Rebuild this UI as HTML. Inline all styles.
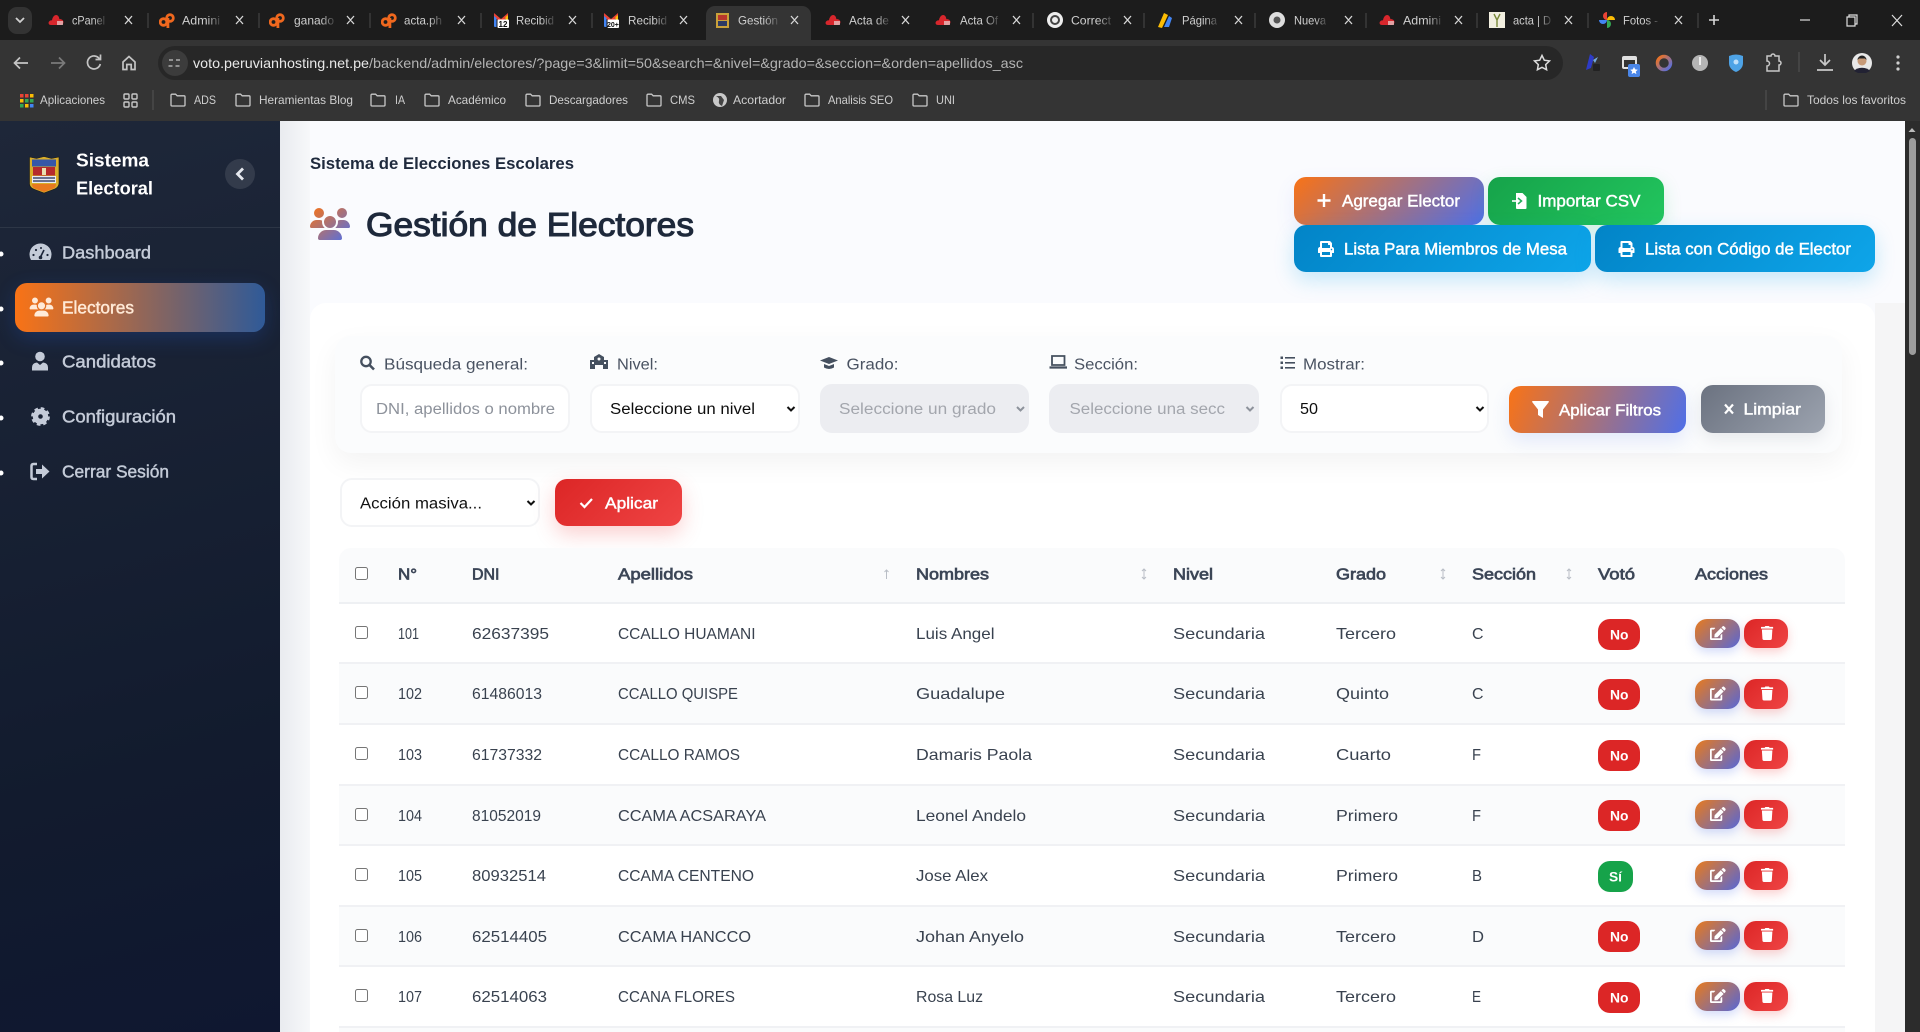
<!DOCTYPE html>
<html lang="es"><head><meta charset="utf-8"><title>Gestión de Electores</title>
<style>
html,body{margin:0;padding:0;width:1920px;height:1032px;overflow:hidden;background:#f5f6f8;font-family:"Liberation Sans",sans-serif}
.b{position:absolute;box-sizing:border-box}
svg.o{position:absolute;left:0;top:0;width:1920px;height:1032px;pointer-events:none}
text{font-family:"Liberation Sans",sans-serif}
.m{stroke:currentColor;stroke-width:.45px}
.h{stroke:currentColor;stroke-width:.7px}
.sb{font-weight:700}
.sel{border:2px solid #f3f4f6;background:#fff;border-radius:12px}
.dis{background:#ecedf1;border-color:#ecedf1}
.og{background:linear-gradient(135deg,#f97316,#4f6fe8)}
.rd{background:linear-gradient(135deg,#dc2626,#ef4444)}
.bt{border-radius:12px}
.ed{border-radius:12px;left:1695px;width:45px;height:29px;background:linear-gradient(135deg,#e97a1c,#5668d8);box-shadow:0 4px 10px rgba(79,111,232,.25)}
.dl{border-radius:12px;left:1744px;width:44px;height:29px;background:linear-gradient(135deg,#dc2626,#ef4444);box-shadow:0 4px 10px rgba(239,68,68,.25)}
.no{border-radius:12px;left:1598px;width:42px;height:31px;background:#dc2626}
.si{border-radius:12px;left:1598px;width:35px;height:31px;background:#16a34a}
.cb{left:355px;width:13px;height:13px;border:1px solid #767676;border-radius:2.5px;background:#fff}
.row{left:339px;width:1506px;height:60px;border-bottom:2px solid #f0f1f4}
</style></head><body>

<!-- browser chrome -->
<div class="b" style="left:0;top:0;width:1920px;height:40px;background:#1c1c1c"></div>
<div class="b" style="left:0;top:40px;width:1920px;height:81px;background:#343434"></div>
<div class="b" style="left:8px;top:7px;width:24px;height:27px;background:#333;border-radius:9px"></div>
<div class="b" style="left:706px;top:6px;width:105px;height:34px;background:#343434;border-radius:9px 9px 0 0"></div>
<div class="b" style="left:158px;top:46px;width:1405px;height:34px;background:#272727;border-radius:17px"></div>
<div class="b" style="left:162px;top:50px;width:26px;height:26px;background:#3c3c3c;border-radius:13px"></div>

<!-- main background -->
<div class="b" style="left:280px;top:121px;width:1625px;height:911px;background:#fafbfe"></div>
<div class="b" style="left:280px;top:121px;width:30px;height:911px;background:linear-gradient(90deg,#e9ebef,#f7f8fa)"></div>
<div class="b" style="left:1875px;top:303px;width:30px;height:729px;background:#f5f5f6"></div>
<div class="b" style="left:310px;top:303px;width:1565px;height:729px;background:#fff;border-radius:16px 16px 0 0"></div>

<!-- scrollbar -->
<div class="b" style="left:1905px;top:121px;width:15px;height:911px;background:#2c2c2c"></div>
<div class="b" style="left:1909px;top:138px;width:7px;height:217px;background:#9d9d9d;border-radius:4px"></div>

<!-- sidebar -->
<div class="b" style="left:0;top:121px;width:280px;height:911px;background:linear-gradient(165deg,#1e2739,#121b2e 70%,#0f1730)"></div>
<div class="b" style="left:0;top:227px;width:280px;height:1px;background:rgba(255,255,255,.08)"></div>
<div class="b" style="left:225px;top:159px;width:30px;height:30px;border-radius:15px;background:rgba(255,255,255,.1)"></div>
<div class="b" style="left:15px;top:283px;width:250px;height:49px;border-radius:12px;background:linear-gradient(90deg,#f97316,#2f5a98);box-shadow:0 6px 20px rgba(37,99,235,.22)"></div>

<!-- top buttons -->
<div class="b bt og" style="left:1294px;top:177px;width:190px;height:48px;box-shadow:0 8px 20px rgba(79,111,232,.1)"></div>
<div class="b bt" style="left:1488px;top:177px;width:176px;height:48px;background:linear-gradient(135deg,#16a34a,#22c55e);box-shadow:0 6px 18px rgba(34,197,94,.18)"></div>
<div class="b bt" style="left:1294px;top:225px;width:297px;height:47px;background:linear-gradient(135deg,#0284c7,#0ea5e9);box-shadow:0 8px 20px rgba(14,165,233,.22)"></div>
<div class="b bt" style="left:1595px;top:225px;width:280px;height:47px;background:linear-gradient(135deg,#0284c7,#0ea5e9);box-shadow:0 8px 20px rgba(14,165,233,.22)"></div>

<!-- filter card -->
<div class="b" style="left:335px;top:336px;width:1507px;height:117px;background:#fbfcfd;border-radius:16px;box-shadow:0 10px 28px rgba(0,0,0,.05)"></div>
<div class="b sel" style="left:360px;top:384px;width:210px;height:49px"></div>
<div class="b sel" style="left:590px;top:384px;width:210px;height:49px"></div>
<div class="b sel dis" style="left:820px;top:384px;width:209px;height:49px"></div>
<div class="b sel dis" style="left:1049px;top:384px;width:210px;height:49px"></div>
<div class="b sel" style="left:1280px;top:384px;width:209px;height:49px"></div>
<div class="b bt" style="left:1509px;top:386px;width:177px;height:47px;background:linear-gradient(110deg,#f97316,#4f6fe8);box-shadow:0 8px 18px rgba(79,111,232,.14)"></div>
<div class="b bt" style="left:1701px;top:385px;width:124px;height:48px;background:linear-gradient(135deg,#6b7280,#9ca3af);box-shadow:0 6px 16px rgba(107,114,128,.14)"></div>

<!-- bulk -->
<div class="b sel" style="left:340px;top:478px;width:200px;height:49px"></div>
<div class="b bt rd" style="left:555px;top:479px;width:127px;height:47px;box-shadow:0 8px 20px rgba(239,68,68,.25)"></div>

<!-- table -->
<div class="b" style="left:339px;top:548px;width:1506px;height:56px;background:#fafbfc;border-bottom:2px solid #eef0f3;border-radius:12px 12px 0 0"></div>
<div class="b row" style="top:604px;height:60px;background:#fff"></div>
<div class="b row" style="top:664px;height:61px;background:#fafbfc"></div>
<div class="b row" style="top:725px;height:61px;background:#fff"></div>
<div class="b row" style="top:786px;height:60px;background:#fafbfc"></div>
<div class="b row" style="top:846px;height:61px;background:#fff"></div>
<div class="b row" style="top:907px;height:60px;background:#fafbfc"></div>
<div class="b row" style="top:967px;height:61px;background:#fff"></div>
<div class="b row" style="top:1028px;height:4px;background:#fafbfc;border:0"></div>

<div class="b cb" style="top:567px"></div>
<div class="b cb" style="top:626px"></div>
<div class="b cb" style="top:686px"></div>
<div class="b cb" style="top:747px"></div>
<div class="b cb" style="top:808px"></div>
<div class="b cb" style="top:868px"></div>
<div class="b cb" style="top:929px"></div>
<div class="b cb" style="top:989px"></div>

<div class="b no" style="top:619px"></div><div class="b ed" style="top:619px"></div><div class="b dl" style="top:619px"></div>
<div class="b no" style="top:679px"></div><div class="b ed" style="top:679px;height:30px"></div><div class="b dl" style="top:679px;height:30px"></div>
<div class="b no" style="top:740px"></div><div class="b ed" style="top:740px"></div><div class="b dl" style="top:740px"></div>
<div class="b no" style="top:800px"></div><div class="b ed" style="top:800px"></div><div class="b dl" style="top:800px"></div>
<div class="b si" style="top:861px"></div><div class="b ed" style="top:861px"></div><div class="b dl" style="top:861px"></div>
<div class="b no" style="top:921px"></div><div class="b ed" style="top:921px"></div><div class="b dl" style="top:921px"></div>
<div class="b no" style="top:982px"></div><div class="b ed" style="top:982px"></div><div class="b dl" style="top:982px"></div>

<svg class="o" viewBox="0 0 1920 1032" xmlns="http://www.w3.org/2000/svg">
<defs>
<linearGradient id="fd" x1="0" x2="1" y1="0" y2="0"><stop offset=".65" stop-color="#cfcfcf"/><stop offset="1" stop-color="#cfcfcf" stop-opacity=".2"/></linearGradient>
<linearGradient id="tg" x1="0" x2="1" y1="0" y2="1"><stop offset="0" stop-color="#f97316"/><stop offset="1" stop-color="#4f6fe8"/></linearGradient>
<symbol id="users" viewBox="0 0 640 512"><path d="M144 0a80 80 0 1 1 0 160A80 80 0 1 1 144 0zM512 0a80 80 0 1 1 0 160A80 80 0 1 1 512 0zM0 298.700C0 239.800 47.800 192 106.700 192h42.700c15.900 0 31 3.500 44.600 9.700c-1.300 7.200-1.900 14.700-1.900 22.300c0 38.200 16.800 72.500 43.300 96c-.2 0-.4 0-.7 0H21.300C9.600 320 0 310.400 0 298.700zM405.300 320c-.2 0-.4 0-.7 0c26.600-23.500 43.300-57.800 43.300-96c0-7.600-.7-15-1.900-22.300c13.600-6.300 28.700-9.700 44.600-9.700h42.700C592.200 192 640 239.800 640 298.700c0 11.800-9.600 21.300-21.300 21.300H405.300zM224 224a96 96 0 1 1 192 0 96 96 0 1 1 -192 0zM128 485.300C128 411.700 187.700 352 261.300 352H378.700C452.300 352 512 411.700 512 485.300c0 14.700-11.900 26.700-26.700 26.700H154.700c-14.700 0-26.700-11.900-26.700-26.700z"/></symbol>
<symbol id="trash" viewBox="0 0 448 512"><path fill="#fff" d="M432 32H312l-9.400-18.700A24 24 0 0 0 281.100 0H166.800a23.720 23.720 0 0 0-21.400 13.300L136 32H16A16 16 0 0 0 0 48v32a16 16 0 0 0 16 16h416a16 16 0 0 0 16-16V48a16 16 0 0 0-16-16zM53.200 467a48 48 0 0 0 47.900 45h245.800a48 48 0 0 0 47.900-45L416 128H32z"/></symbol>
<symbol id="edit" viewBox="0 0 576 512"><path fill="#fff" d="M402.600 83.200l90.200 90.200c3.800 3.800 3.800 10 0 13.800L274.400 405.600l-92.800 10.300c-12.400 1.400-22.900-9.100-21.500-21.500l10.300-92.800L388.800 83.200c3.800-3.800 10-3.800 13.800 0zm162-22.900l-48.800-48.800c-15.200-15.200-39.900-15.200-55.200 0l-35.400 35.400c-3.800 3.800-3.800 10 0 13.800l90.200 90.200c3.800 3.800 10 3.800 13.800 0l35.400-35.400c15.200-15.300 15.200-40 0-55.200zM384 346.200V448H64V128h73.100c3.200 0 6.200-1.300 8.500-3.500l40-40c7.600-7.600 2.200-20.500-8.500-20.500H48C21.500 64 0 85.500 0 112v352c0 26.500 21.500 48 48 48h352c26.500 0 48-21.500 48-48V306.200c0-10.700-12.900-16-20.500-8.500l-40 40c-2.200 2.300-3.500 5.300-3.500 8.500z"/></symbol>
<symbol id="print" viewBox="0 0 512 512"><path fill="#fff" d="M448 192V77.250c0-8.490-3.370-16.620-9.370-22.630L393.370 9.370c-6-6-14.140-9.370-22.630-9.370H96C78.330 0 64 14.330 64 32v160c-35.350 0-64 28.650-64 64v112c0 8.840 7.160 16 16 16h48v96c0 17.670 14.330 32 32 32h320c17.670 0 32-14.330 32-32v-96h48c8.840 0 16-7.160 16-16V256c0-35.350-28.650-64-64-64zm-64 256H128v-96h256v96zm0-224H128V64h192v48c0 8.840 7.160 16 16 16h48v96zm48 72c-13.250 0-24-10.750-24-24 0-13.260 10.750-24 24-24s24 10.740 24 24c0 13.250-10.750 24-24 24z"/></symbol>
<symbol id="folder" viewBox="0 0 16 14"><path fill="none" stroke="#c8c8c8" stroke-width="1.300" d="M1 2.200a1 1 0 0 1 1-1h3.600l1.600 1.600H14a1 1 0 0 1 1 1V12a1 1 0 0 1-1 1H2a1 1 0 0 1-1-1z"/></symbol>
<symbol id="redcloud" viewBox="0 0 16 14"><path fill="#d8262c" d="M3 12C.8 12 0 10 1 8.600 1.600 7.400 3 7.300 4 7.200 4.600 3.800 6.500 1.800 8.400 2c2 .3 2.800 2.400 3 4.200 2.200-.2 4.300 1.200 4 3.400-.2 1.600-1.600 2.400-3 2.400z"/><path fill="#e8c9c9" d="M9 8h6v4H9z" opacity=".75"/></symbol>
<symbol id="cp" viewBox="0 0 16 16"><circle cx="4.500" cy="10" r="3.300" fill="none" stroke="#f0681e" stroke-width="2.800"/><circle cx="11" cy="6" r="3.300" fill="none" stroke="#f0681e" stroke-width="2.800"/><rect x="7.500" y="6" width="2.800" height="10" fill="#f0681e"/></symbol>
<symbol id="gm" viewBox="0 0 16 16"><path fill="#ea4335" d="M1 1l7 6 7-6v4L8 10.500 1 5z"/><path fill="#4285f4" d="M1 4l2.500 2v9H2a1 1 0 0 1-1-1z"/><path fill="#fbbc04" d="M15 3l-2.500 2v4H15z"/><rect x="4.500" y="7.500" width="11.500" height="8.500" rx="1" fill="#fff"/></symbol>
</defs>

<!-- tabs -->
<path d="M16 18l4 4 4-4" fill="none" stroke="#d0d0d0" stroke-width="1.800"/>
<g font-size="12" fill="url(#fd)">
<text x="72" y="24.500" textLength="33" lengthAdjust="spacingAndGlyphs">cPanel</text>
<text x="182" y="24.500" textLength="38" lengthAdjust="spacingAndGlyphs">Admini</text>
<text x="294" y="24.500" textLength="40" lengthAdjust="spacingAndGlyphs">ganado</text>
<text x="404" y="24.500" textLength="38" lengthAdjust="spacingAndGlyphs">acta.ph</text>
<text x="516" y="24.500" textLength="38" lengthAdjust="spacingAndGlyphs">Recibid</text>
<text x="628" y="24.500" textLength="39" lengthAdjust="spacingAndGlyphs">Recibid</text>
<text x="738" y="24.500" textLength="40" lengthAdjust="spacingAndGlyphs">Gestión</text>
<text x="849" y="24.500" textLength="40" lengthAdjust="spacingAndGlyphs">Acta de</text>
<text x="960" y="24.500" textLength="38" lengthAdjust="spacingAndGlyphs">Acta Of</text>
<text x="1071" y="24.500" textLength="40" lengthAdjust="spacingAndGlyphs">Correct</text>
<text x="1182" y="24.500" textLength="35" lengthAdjust="spacingAndGlyphs">Página</text>
<text x="1294" y="24.500" textLength="32" lengthAdjust="spacingAndGlyphs">Nueva</text>
<text x="1403" y="24.500" textLength="38" lengthAdjust="spacingAndGlyphs">Admini</text>
<text x="1513" y="24.500" textLength="38" lengthAdjust="spacingAndGlyphs">acta | D</text>
<text x="1623" y="24.500" textLength="35" lengthAdjust="spacingAndGlyphs">Fotos -</text>
</g>
<!-- tab close -->
<g stroke="#d8d8d8" stroke-width="1.300" fill="none">
<path d="M125 16l7 8m0-8l-7 8M236 16l7 8m0-8l-7 8M347 16l7 8m0-8l-7 8M458 16l7 8m0-8l-7 8M569 16l7 8m0-8l-7 8M680 16l7 8m0-8l-7 8M791 16l7 8m0-8l-7 8M902 16l7 8m0-8l-7 8M1013 16l7 8m0-8l-7 8M1124 16l7 8m0-8l-7 8M1235 16l7 8m0-8l-7 8M1345 16l7 8m0-8l-7 8M1455 16l7 8m0-8l-7 8M1565 16l7 8m0-8l-7 8M1675 16l7 8m0-8l-7 8"/>
</g>
<g stroke="#4a4a4a" stroke-width="1"><path d="M148 13v15M259 13v15M370 13v15M481 13v15M592 13v15M1033 13v15M1144 13v15M1255 13v15M1366 13v15M1477 13v15M1588 13v15M1698 13v15"/></g>
<!-- favicons -->
<use href="#redcloud" x="48" y="13" width="16" height="14"/>
<use href="#cp" x="159" y="12" width="16" height="16"/>
<use href="#cp" x="269" y="12" width="16" height="16"/>
<use href="#cp" x="381" y="12" width="16" height="16"/>
<use href="#gm" x="493" y="12" width="16" height="16"/>
<text x="498.500" y="27" font-size="8" font-weight="700" fill="#111">12</text>
<use href="#gm" x="603" y="12" width="16" height="16"/>
<text x="607" y="27" font-size="7" font-weight="700" fill="#111">20+</text>
<g><rect x="716" y="13" width="13" height="15" fill="#c9a13a"/><rect x="718" y="15" width="9" height="5" fill="#b8362c"/><rect x="718" y="21" width="9" height="5" fill="#2d3a63"/></g>
<use href="#redcloud" x="825" y="13" width="16" height="14"/>
<use href="#redcloud" x="935" y="13" width="16" height="14"/>
<g><circle cx="1055" cy="20" r="8" fill="#eee"/><circle cx="1055" cy="20" r="4" fill="none" stroke="#444" stroke-width="2"/></g>
<g transform="translate(-13 0)"><path d="M1171 27l6-14 4 2-6 13z" fill="#fbbc04"/><path d="M1177 27l5-11 3 2-3 9z" fill="#4285f4"/></g>
<g><circle cx="1277" cy="20" r="8" fill="#ddd"/><circle cx="1277" cy="20" r="3.500" fill="#555"/></g>
<use href="#redcloud" x="1379" y="13" width="16" height="14"/>
<g><rect x="1489" y="12" width="16" height="16" fill="#f2efe0"/><path d="M1494 14l3 6 3-6M1497 20v7" stroke="#7a8a3a" stroke-width="1.400" fill="none"/></g>
<g><path d="M1607 20a4 4 0 0 1 0-8z" fill="#ea4335"/><path d="M1607 20a4 4 0 0 1 8 0z" fill="#fbbc04"/><path d="M1607 20a4 4 0 0 1 0 8z" fill="#34a853"/><path d="M1607 20a4 4 0 0 1-8 0z" fill="#4285f4"/></g>
<path d="M1709 20h10M1714 15v10" stroke="#d8d8d8" stroke-width="1.600"/>
<!-- window controls -->
<path d="M1800 20h10" stroke="#ddd" stroke-width="1.200"/>
<path d="M1847 17h8v9h-8zM1849 17v-2h8v9h-2" fill="none" stroke="#ddd" stroke-width="1.200"/>
<path d="M1892 15l10 11m0-11l-10 11" stroke="#ddd" stroke-width="1.200"/>

<!-- toolbar -->
<g fill="none" stroke="#c4c4c4" stroke-width="1.700">
<path d="M28 63H15m5-5.500L14.500 63l5.500 5.500"/>
<path d="M51 63h13m-5-5.500l5.500 5.500-5.500 5.500" stroke="#7a7a7a"/>
<path d="M99.500 59a6.500 6.500 0 1 0 .8 5M100.500 54.500v5h-5"/>
<path d="M123 62l6-5.500 6 5.500v7.500h-3.800v-5h-4.400v5H123z"/>
<path d="M169 60h4m3 0h4M168.500 66h4m3 0h4" stroke-width="1.300"/>
</g>
<text x="193" y="68" font-size="14" fill="#e8e8e8" textLength="176" lengthAdjust="spacingAndGlyphs">voto.peruvianhosting.net.pe</text>
<text x="369" y="68" font-size="14" fill="#b4b4b4" textLength="654" lengthAdjust="spacingAndGlyphs">/backend/admin/electores/?page=3&amp;limit=50&amp;search=&amp;nivel=&amp;grado=&amp;seccion=&amp;orden=apellidos_asc</text>
<path d="M1542 55.500l2.300 4.700 5.200.700-3.800 3.700.9 5.100-4.600-2.400-4.600 2.400.9-5.100-3.800-3.700 5.200-.7z" fill="none" stroke="#ddd" stroke-width="1.500"/>
<!-- extensions -->
<path d="M1590 54l4 3-3 11-5 2z" fill="#2d3bc8"/><path d="M1593 60l5-3-3 6z" fill="#7ad"/><rect x="1593" y="64" width="7" height="7" fill="#222" rx="1"/>
<rect x="1622" y="56" width="15" height="13" rx="2" fill="#e0e0e0"/><rect x="1624" y="60" width="11" height="7" fill="#333"/><rect x="1628" y="64" width="12" height="13" rx="2" fill="#4a86e8"/><path d="M1634 67l1.200 2.400 2.600.3-2 1.800.6 2.600-2.400-1.400-2.400 1.400.6-2.600-2-1.800 2.600-.3z" fill="#fff"/>
<circle cx="1664" cy="63" r="6.500" fill="none" stroke="url(#tg)" stroke-width="3.500"/>
<circle cx="1700" cy="63" r="8" fill="#b5b5b5"/><path d="M1700 57v8" stroke="#eee" stroke-width="2"/>
<path d="M1729 56q7-3 14 0v7q0 6-7 9-7-3-7-9z" fill="#4ea3e6"/><circle cx="1736" cy="62" r="2.500" fill="#bfe0fa"/>
<path d="M1767 56h4a2 2 0 0 1 4 0h4v5a2 2 0 0 1 0 4v6h-12v-5a2 2 0 0 0 0-5z" fill="none" stroke="#c8c8c8" stroke-width="1.500"/>
<path d="M1799 52v20" stroke="#555"/>
<path d="M1825 54v11m-5-5l5 5 5-5M1817 70h16" fill="none" stroke="#c8c8c8" stroke-width="1.700"/>
<circle cx="1862" cy="63" r="10" fill="#e8e8e8"/><circle cx="1862" cy="61" r="4.500" fill="#c79a78"/><path d="M1857.500 60a4.500 4.500 0 0 1 9 0l-1.500-1.500h-6z" fill="#222"/><path d="M1854 71a9 6 0 0 1 16 0l-4 2h-8z" fill="#223"/>
<g fill="#d0d0d0"><circle cx="1898" cy="57" r="1.600"/><circle cx="1898" cy="63" r="1.600"/><circle cx="1898" cy="69" r="1.600"/></g>

<!-- bookmarks -->
<g><rect x="20" y="94" width="3.500" height="3.500" fill="#ea4335"/><rect x="25" y="94" width="3.500" height="3.500" fill="#ea4335"/><rect x="30" y="94" width="3.500" height="3.500" fill="#fbbc04"/><rect x="20" y="99" width="3.500" height="3.500" fill="#fbbc04"/><rect x="25" y="99" width="3.500" height="3.500" fill="#34a853"/><rect x="30" y="99" width="3.500" height="3.500" fill="#34a853"/><rect x="20" y="104" width="3.500" height="3.500" fill="#34a853"/><rect x="25" y="104" width="3.500" height="3.500" fill="#fbbc04"/><rect x="30" y="104" width="3.500" height="3.500" fill="#4285f4"/></g>
<g fill="none" stroke="#c8c8c8" stroke-width="1.400"><rect x="124" y="94" width="5" height="5" rx="1"/><rect x="132" y="94" width="5" height="5" rx="1"/><rect x="124" y="102" width="5" height="5" rx="1"/><rect x="132" y="102" width="5" height="5" rx="1"/></g>
<path d="M153 90v20M1766 90v20" stroke="#555"/>
<use href="#folder" x="170" y="93" width="16" height="14"/>
<use href="#folder" x="235" y="93" width="16" height="14"/>
<use href="#folder" x="370" y="93" width="16" height="14"/>
<use href="#folder" x="424" y="93" width="16" height="14"/>
<use href="#folder" x="525" y="93" width="16" height="14"/>
<use href="#folder" x="646" y="93" width="16" height="14"/>
<use href="#folder" x="804" y="93" width="16" height="14"/>
<use href="#folder" x="912" y="93" width="16" height="14"/>
<use href="#folder" x="1783" y="93" width="16" height="14"/>
<circle cx="720" cy="100" r="7" fill="#c8c8c8"/><path d="M716 96q4 2 3 5t3 5l2-6-3-4z" fill="#444"/>
<g font-size="12" fill="#cfcfcf">
<text x="40" y="104" textLength="65" lengthAdjust="spacingAndGlyphs">Aplicaciones</text>
<text x="194" y="104" textLength="22" lengthAdjust="spacingAndGlyphs">ADS</text>
<text x="259" y="104" textLength="94" lengthAdjust="spacingAndGlyphs">Heramientas Blog</text>
<text x="395" y="104" textLength="10" lengthAdjust="spacingAndGlyphs">IA</text>
<text x="448" y="104" textLength="58" lengthAdjust="spacingAndGlyphs">Académico</text>
<text x="549" y="104" textLength="79" lengthAdjust="spacingAndGlyphs">Descargadores</text>
<text x="670" y="104" textLength="25" lengthAdjust="spacingAndGlyphs">CMS</text>
<text x="733" y="104" textLength="53" lengthAdjust="spacingAndGlyphs">Acortador</text>
<text x="828" y="104" textLength="65" lengthAdjust="spacingAndGlyphs">Analisis SEO</text>
<text x="936" y="104" textLength="19" lengthAdjust="spacingAndGlyphs">UNI</text>
<text x="1807" y="104" textLength="99" lengthAdjust="spacingAndGlyphs">Todos los favoritos</text>
</g>
<path d="M1912 128l3.500 4h-7z" fill="#bbb"/>

<!-- sidebar content -->
<g>
<path d="M29.500 157l7 1.500 7.500-2 7.500 2 7.500-1.500v26q0 5-7 7l-8 3-8-3q-7-2-6.500-7z" fill="#d9ae2a" stroke="#1a1a1a" stroke-width=".6"/>
<rect x="32" y="159.500" width="24" height="7" fill="#3657a8"/>
<rect x="33" y="167" width="22" height="8.500" fill="#b62a2c"/><rect x="42" y="168" width="4" height="7" fill="#e9e0b0"/>
<rect x="32" y="176" width="24" height="7" fill="#e9e9f2"/><path d="M33 178h22M33 181h22" stroke="#1d2a55" stroke-width="1.300"/>
<path d="M32 184h24q0 4-4 5l-8 3-8-3q-4-1-4-5z" fill="#e8791f"/>
</g>
<g fill="#fff" font-size="18.500" class="sb">
<text x="76" y="166.500" textLength="73" lengthAdjust="spacingAndGlyphs">Sistema</text>
<text x="76" y="194.500" textLength="77" lengthAdjust="spacingAndGlyphs">Electoral</text>
</g>
<path d="M243 168.500l-5.500 5.500 5.500 5.500" fill="none" stroke="#e6e9ef" stroke-width="2.800"/>
<g fill="#fff"><circle cx="1" cy="254" r="2.500"/><circle cx="1" cy="309" r="2.500"/><circle cx="1" cy="363" r="2.500"/><circle cx="1" cy="418" r="2.500"/><circle cx="1" cy="473" r="2.500"/></g>
<g font-size="17.500" fill="#c4cbd8" color="#c4cbd8">
<text class="m" x="62" y="258.500" textLength="89" lengthAdjust="spacingAndGlyphs">Dashboard</text>
<text class="m" x="62" y="367.500" textLength="94" lengthAdjust="spacingAndGlyphs">Candidatos</text>
<text class="m" x="62" y="422.500" textLength="114" lengthAdjust="spacingAndGlyphs">Configuración</text>
<text class="m" x="62" y="477.500" textLength="107" lengthAdjust="spacingAndGlyphs">Cerrar Sesión</text>
</g>
<text class="m" x="62" y="313.500" font-size="17.500" fill="#ffe9d6" color="#ffe9d6" textLength="72" lengthAdjust="spacingAndGlyphs">Electores</text>
<!-- gauge -->
<path d="M31 260A11 11 0 1 1 50 260Z" fill="#c4cbd8"/>
<path d="M40.500 257l3.500-7" stroke="#1c2538" stroke-width="1.600"/><circle cx="40.500" cy="257.500" r="1.800" fill="#1c2538"/><g fill="#1c2538"><circle cx="33.500" cy="255" r="1.100"/><circle cx="36" cy="250" r="1.100"/><circle cx="47.500" cy="255" r="1.100"/><circle cx="41" cy="248" r="1"/></g>
<use href="#users" x="29.500" y="297.500" width="24" height="19" fill="#ffead8"/>
<!-- user tie -->
<g fill="#c4cbd8"><circle cx="40" cy="356.500" r="4.800"/><path d="M32 370.500v-3q0-4.500 5-5l3 2.500 3-2.500q5 .5 5 5v3z"/></g>
<!-- cog -->
<g><circle cx="40.500" cy="416.500" r="5" fill="none" stroke="#c4cbd8" stroke-width="5.400"/><circle cx="40.500" cy="416.500" r="8" fill="none" stroke="#c4cbd8" stroke-width="2.800" stroke-dasharray="3.500 2.780"/></g>
<!-- sign out -->
<g fill="none" stroke="#c4cbd8"><path d="M37 464h-3.500q-2 0-2 2v11q0 2 2 2H37" stroke-width="2.500"/></g>
<path d="M36 469h6v-4.500l7.500 7-7.500 7V474h-6z" fill="#c4cbd8"/>

<!-- header -->
<text x="310" y="169" font-size="16.500" fill="#1f2a3d" font-weight="700" textLength="264" lengthAdjust="spacingAndGlyphs">Sistema de Elecciones Escolares</text>
<use href="#users" x="310" y="208" width="40" height="32" fill="url(#tg)"/>
<text x="366" y="236" font-size="33" fill="#1e293b" color="#1e293b" style="stroke:currentColor;stroke-width:1.100px" textLength="328" lengthAdjust="spacingAndGlyphs">Gestión de Electores</text>

<!-- top btn text -->
<g font-size="16.500" fill="#fff" color="#fff">
<text class="m" x="1342" y="206.500" textLength="118" lengthAdjust="spacingAndGlyphs">Agregar Elector</text>
<text class="m" x="1537.500" y="206.500" textLength="103" lengthAdjust="spacingAndGlyphs">Importar CSV</text>
<text class="m" x="1344" y="254.500" textLength="223" lengthAdjust="spacingAndGlyphs">Lista Para Miembros de Mesa</text>
<text class="m" x="1645" y="254.500" textLength="206" lengthAdjust="spacingAndGlyphs">Lista con Código de Elector</text>
</g>
<path d="M1324 194v13M1317.500 200.500h13" stroke="#fff" stroke-width="2.400"/>
<path d="M1516 193h6.500l4 4v11q0 1-1 1H1517q-1 0-1-1z" fill="#fff"/><path d="M1518 198l3.500 3-3.500 3" fill="none" stroke="#1fae58" stroke-width="1.500"/><path d="M1512 201h6" stroke="#fff" stroke-width="1.600"/>
<use href="#print" x="1318" y="241" width="16" height="16"/>
<use href="#print" x="1618.500" y="241" width="16" height="16"/>

<!-- filter labels -->
<g font-size="15.500" fill="#4a5362" color="#4a5362">
<text x="384" y="369.500" textLength="144" lengthAdjust="spacingAndGlyphs">Búsqueda general:</text>
<text x="617" y="369.500" textLength="41" lengthAdjust="spacingAndGlyphs">Nivel:</text>
<text x="846.500" y="369.500" textLength="52" lengthAdjust="spacingAndGlyphs">Grado:</text>
<text x="1074" y="369.500" textLength="64" lengthAdjust="spacingAndGlyphs">Sección:</text>
<text x="1303" y="369.500" textLength="62" lengthAdjust="spacingAndGlyphs">Mostrar:</text>
</g>
<!-- label icons -->
<circle cx="366" cy="361.500" r="4.700" fill="none" stroke="#45505f" stroke-width="2.300"/><path d="M369.500 365l4.500 4.500" stroke="#45505f" stroke-width="2.600"/>
<path d="M590 369v-9h4v-3l5-3 5 3v3h4v9h-5v-4h-8v4zM592 362v2h2v-2zM604 362v2h2v-2z" fill="#45505f" fill-rule="evenodd"/><circle cx="599" cy="359" r="1.500" fill="#fafbfc"/>
<path d="M820 360.500l9-3.500 9 3.500-9 3.500zM824 364l5 2 5-2v3.500q-5 3-10 0z" fill="#45505f"/>
<path d="M1052 356h12.500v9H1052z" fill="none" stroke="#45505f" stroke-width="1.800"/><path d="M1049.500 367.500h17.500" stroke="#45505f" stroke-width="2.200"/>
<g fill="#45505f"><rect x="1280.500" y="356.500" width="2.500" height="2.500"/><rect x="1280.500" y="361.500" width="2.500" height="2.500"/><rect x="1280.500" y="366.500" width="2.500" height="2.500"/><rect x="1285" y="357" width="10" height="1.600"/><rect x="1285" y="362" width="10" height="1.600"/><rect x="1285" y="367" width="10" height="1.600"/></g>
<!-- inputs text -->
<text x="376" y="414" font-size="15.500" fill="#8d929b" textLength="179" lengthAdjust="spacingAndGlyphs">DNI, apellidos o nombre</text>
<text x="610" y="414" font-size="15.500" fill="#0d0d0d" textLength="145" lengthAdjust="spacingAndGlyphs">Seleccione un nivel</text>
<text x="839" y="414" font-size="15.500" fill="#a3a6ad" textLength="157" lengthAdjust="spacingAndGlyphs">Seleccione un grado</text>
<text x="1069.500" y="414" font-size="15.500" fill="#a3a6ad" textLength="155.500" lengthAdjust="spacingAndGlyphs">Seleccione una secc</text>
<text x="1300" y="414" font-size="15.500" fill="#0d0d0d" textLength="18" lengthAdjust="spacingAndGlyphs">50</text>
<g fill="none" stroke-width="2">
<path d="M787.500 407l3.500 3.500 3.500-3.500M1476.500 407l3.500 3.500 3.500-3.500M527.500 501l3.500 3.500 3.500-3.500" stroke="#111"/>
<path d="M1017 407l3.500 3.500 3.500-3.500M1246.500 407l3.500 3.500 3.500-3.500" stroke="#8d929b"/>
</g>
<path d="M1532.500 401h15.500q1.500 0 .5 1.500l-5.500 7v8.500l-5-3v-5.500l-5.500-7q-1-1.500 .5-1.500z" fill="#fff"/>
<g font-size="16" fill="#fff" color="#fff">
<text class="m" x="1559" y="415.500" textLength="102" lengthAdjust="spacingAndGlyphs">Aplicar Filtros</text>
<text class="m" x="1743.500" y="414.500" textLength="57.500" lengthAdjust="spacingAndGlyphs">Limpiar</text>
<text class="m" x="605" y="508.500" textLength="53" lengthAdjust="spacingAndGlyphs">Aplicar</text>
</g>
<path d="M1725 404.500l8 9m0-9l-8 9" stroke="#fff" stroke-width="2.200"/>
<path d="M580.500 503l4 4 7.500-8" fill="none" stroke="#fff" stroke-width="2.200"/>
<text x="360" y="508.500" font-size="15.500" fill="#111" textLength="122" lengthAdjust="spacingAndGlyphs">Acción masiva...</text>

<!-- table head -->
<g font-size="16" fill="#3c4657" color="#3c4657">
<text class="h" x="398" y="579.500" textLength="19" lengthAdjust="spacingAndGlyphs">N°</text>
<text class="h" x="472" y="579.500" textLength="27.500" lengthAdjust="spacingAndGlyphs">DNI</text>
<text class="h" x="618" y="579.500" textLength="75" lengthAdjust="spacingAndGlyphs">Apellidos</text>
<text class="h" x="916" y="579.500" textLength="73" lengthAdjust="spacingAndGlyphs">Nombres</text>
<text class="h" x="1173" y="579.500" textLength="40" lengthAdjust="spacingAndGlyphs">Nivel</text>
<text class="h" x="1336" y="579.500" textLength="50" lengthAdjust="spacingAndGlyphs">Grado</text>
<text class="h" x="1472" y="579.500" textLength="64" lengthAdjust="spacingAndGlyphs">Sección</text>
<text class="h" x="1598" y="579.500" textLength="37" lengthAdjust="spacingAndGlyphs">Votó</text>
<text class="h" x="1695" y="579.500" textLength="73" lengthAdjust="spacingAndGlyphs">Acciones</text>
</g>
<g stroke="#b9bec6" stroke-width="1" fill="none">
<path d="M886.500 570v9m-2-7l2-2 2 2"/>
<path d="M1144 569v10m-2-8l2-2 2 2m-4 6l2 2 2-2M1443 569v10m-2-8l2-2 2 2m-4 6l2 2 2-2M1569 569v10m-2-8l2-2 2 2m-4 6l2 2 2-2"/>
</g>

<!-- rows -->
<g font-size="16" fill="#39424f">
<text x="398" y="639" textLength="21" lengthAdjust="spacingAndGlyphs">101</text>
<text x="472" y="639" textLength="77" lengthAdjust="spacingAndGlyphs">62637395</text>
<text x="618" y="639" textLength="137.500" lengthAdjust="spacingAndGlyphs">CCALLO HUAMANI</text>
<text x="916" y="639" textLength="78.500" lengthAdjust="spacingAndGlyphs">Luis Angel</text>
<text x="1173" y="639" textLength="92" lengthAdjust="spacingAndGlyphs">Secundaria</text>
<text x="1336" y="639" textLength="60" lengthAdjust="spacingAndGlyphs">Tercero</text>
<text x="1472" y="639" textLength="11.500" lengthAdjust="spacingAndGlyphs">C</text>

<text x="398" y="699" textLength="24" lengthAdjust="spacingAndGlyphs">102</text>
<text x="472" y="699" textLength="70" lengthAdjust="spacingAndGlyphs">61486013</text>
<text x="618" y="699" textLength="120" lengthAdjust="spacingAndGlyphs">CCALLO QUISPE</text>
<text x="916" y="699" textLength="89" lengthAdjust="spacingAndGlyphs">Guadalupe</text>
<text x="1173" y="699" textLength="92" lengthAdjust="spacingAndGlyphs">Secundaria</text>
<text x="1336" y="699" textLength="53" lengthAdjust="spacingAndGlyphs">Quinto</text>
<text x="1472" y="699" textLength="11.500" lengthAdjust="spacingAndGlyphs">C</text>

<text x="398" y="760" textLength="24" lengthAdjust="spacingAndGlyphs">103</text>
<text x="472" y="760" textLength="70" lengthAdjust="spacingAndGlyphs">61737332</text>
<text x="618" y="760" textLength="122" lengthAdjust="spacingAndGlyphs">CCALLO RAMOS</text>
<text x="916" y="760" textLength="116" lengthAdjust="spacingAndGlyphs">Damaris Paola</text>
<text x="1173" y="760" textLength="92" lengthAdjust="spacingAndGlyphs">Secundaria</text>
<text x="1336" y="760" textLength="55" lengthAdjust="spacingAndGlyphs">Cuarto</text>
<text x="1472" y="760" textLength="9" lengthAdjust="spacingAndGlyphs">F</text>

<text x="398" y="821" textLength="24" lengthAdjust="spacingAndGlyphs">104</text>
<text x="472" y="821" textLength="69" lengthAdjust="spacingAndGlyphs">81052019</text>
<text x="618" y="821" textLength="148" lengthAdjust="spacingAndGlyphs">CCAMA ACSARAYA</text>
<text x="916" y="821" textLength="110" lengthAdjust="spacingAndGlyphs">Leonel Andelo</text>
<text x="1173" y="821" textLength="92" lengthAdjust="spacingAndGlyphs">Secundaria</text>
<text x="1336" y="821" textLength="62" lengthAdjust="spacingAndGlyphs">Primero</text>
<text x="1472" y="821" textLength="9" lengthAdjust="spacingAndGlyphs">F</text>

<text x="398" y="881" textLength="24" lengthAdjust="spacingAndGlyphs">105</text>
<text x="472" y="881" textLength="74" lengthAdjust="spacingAndGlyphs">80932514</text>
<text x="618" y="881" textLength="136" lengthAdjust="spacingAndGlyphs">CCAMA CENTENO</text>
<text x="916" y="881" textLength="72" lengthAdjust="spacingAndGlyphs">Jose Alex</text>
<text x="1173" y="881" textLength="92" lengthAdjust="spacingAndGlyphs">Secundaria</text>
<text x="1336" y="881" textLength="62" lengthAdjust="spacingAndGlyphs">Primero</text>
<text x="1472" y="881" textLength="10" lengthAdjust="spacingAndGlyphs">B</text>

<text x="398" y="942" textLength="24" lengthAdjust="spacingAndGlyphs">106</text>
<text x="472" y="942" textLength="75" lengthAdjust="spacingAndGlyphs">62514405</text>
<text x="618" y="942" textLength="133" lengthAdjust="spacingAndGlyphs">CCAMA HANCCO</text>
<text x="916" y="942" textLength="108" lengthAdjust="spacingAndGlyphs">Johan Anyelo</text>
<text x="1173" y="942" textLength="92" lengthAdjust="spacingAndGlyphs">Secundaria</text>
<text x="1336" y="942" textLength="60" lengthAdjust="spacingAndGlyphs">Tercero</text>
<text x="1472" y="942" textLength="12" lengthAdjust="spacingAndGlyphs">D</text>

<text x="398" y="1002" textLength="24" lengthAdjust="spacingAndGlyphs">107</text>
<text x="472" y="1002" textLength="75" lengthAdjust="spacingAndGlyphs">62514063</text>
<text x="618" y="1002" textLength="117" lengthAdjust="spacingAndGlyphs">CCANA FLORES</text>
<text x="916" y="1002" textLength="67" lengthAdjust="spacingAndGlyphs">Rosa Luz</text>
<text x="1173" y="1002" textLength="92" lengthAdjust="spacingAndGlyphs">Secundaria</text>
<text x="1336" y="1002" textLength="60" lengthAdjust="spacingAndGlyphs">Tercero</text>
<text x="1472" y="1002" textLength="9" lengthAdjust="spacingAndGlyphs">E</text>
</g>

<!-- badges -->
<g font-size="14" font-weight="700" fill="#fff">
<text x="1610" y="639.500" textLength="18.500" lengthAdjust="spacingAndGlyphs">No</text>
<text x="1610" y="699.500" textLength="18.500" lengthAdjust="spacingAndGlyphs">No</text>
<text x="1610" y="760.500" textLength="18.500" lengthAdjust="spacingAndGlyphs">No</text>
<text x="1610" y="820.500" textLength="18.500" lengthAdjust="spacingAndGlyphs">No</text>
<text x="1609" y="881.500" textLength="13" lengthAdjust="spacingAndGlyphs">Sí</text>
<text x="1610" y="941.500" textLength="18.500" lengthAdjust="spacingAndGlyphs">No</text>
<text x="1610" y="1002.500" textLength="18.500" lengthAdjust="spacingAndGlyphs">No</text>
</g>
<!-- action icons -->
<use href="#edit" x="1710" y="626" width="15.750" height="14"/><use href="#trash" x="1761" y="626" width="12.250" height="14"/>
<use href="#edit" x="1710" y="686.500" width="15.750" height="14"/><use href="#trash" x="1761" y="686.500" width="12.250" height="14"/>
<use href="#edit" x="1710" y="747" width="15.750" height="14"/><use href="#trash" x="1761" y="747" width="12.250" height="14"/>
<use href="#edit" x="1710" y="807" width="15.750" height="14"/><use href="#trash" x="1761" y="807" width="12.250" height="14"/>
<use href="#edit" x="1710" y="868" width="15.750" height="14"/><use href="#trash" x="1761" y="868" width="12.250" height="14"/>
<use href="#edit" x="1710" y="928" width="15.750" height="14"/><use href="#trash" x="1761" y="928" width="12.250" height="14"/>
<use href="#edit" x="1710" y="989" width="15.750" height="14"/><use href="#trash" x="1761" y="989" width="12.250" height="14"/>
</svg>
</body></html>
